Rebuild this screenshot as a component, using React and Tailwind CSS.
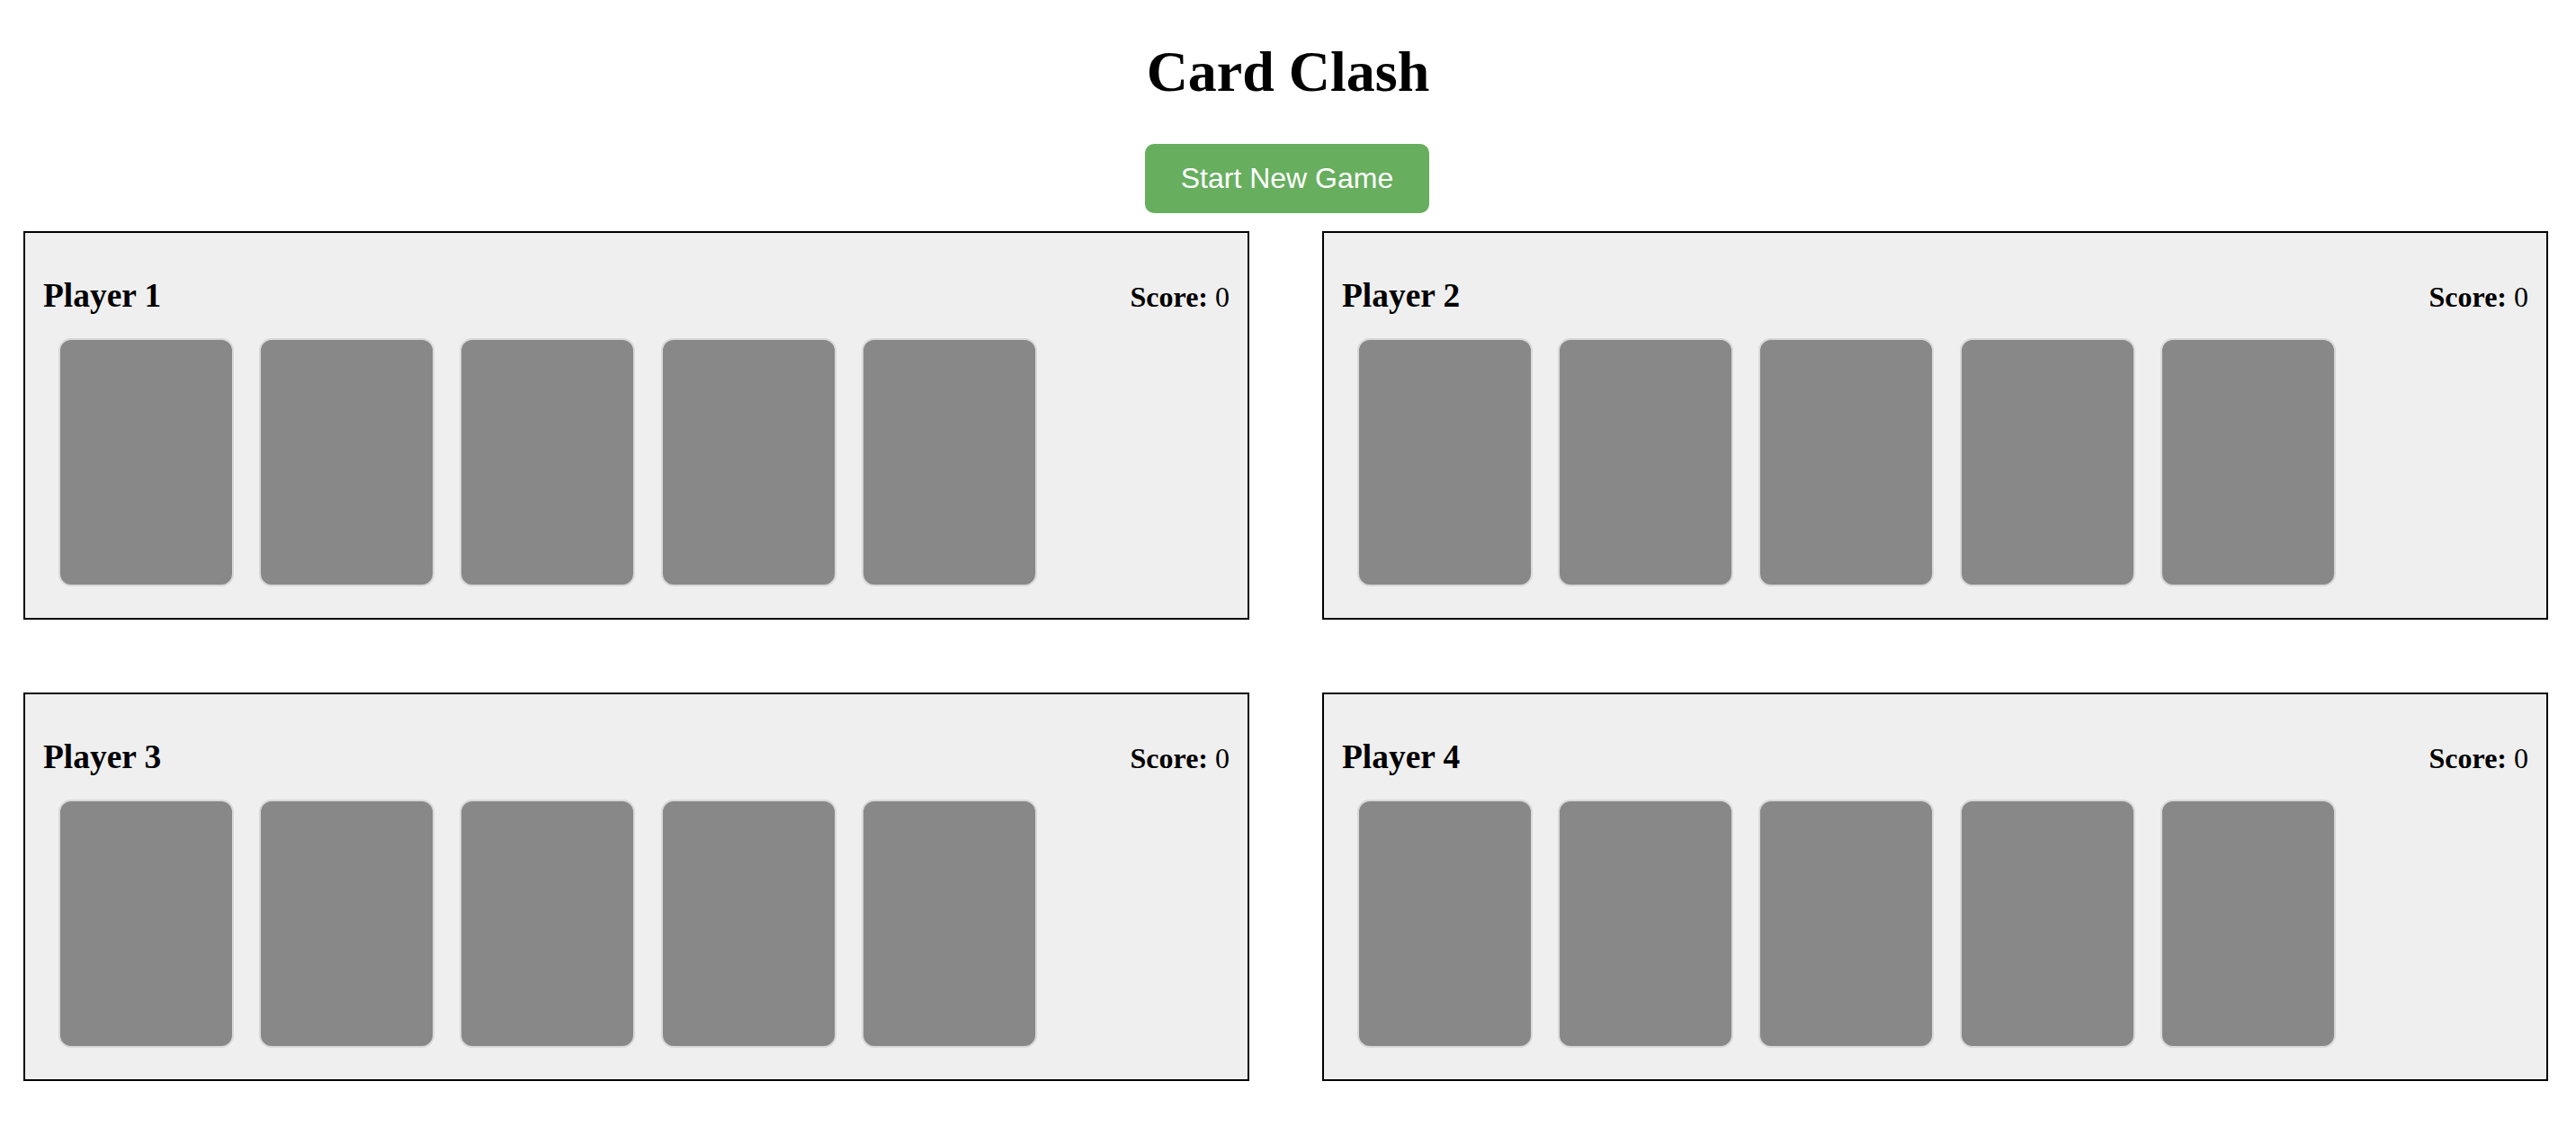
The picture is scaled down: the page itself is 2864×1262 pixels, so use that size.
const players = [
  { id: 1, name: 'Player 1', score: 0 },
  { id: 2, name: 'Player 2', score: 0 },
  { id: 3, name: 'Player 3', score: 0 },
  { id: 4, name: 'Player 4', score: 0 },
];

function Card() {
  return <div className="w-[195px] h-[276px] shrink-0 rounded-[14px] border-2 border-[#d8d8d8] bg-[#888888]" />;
}

function PlayerPanel({ player }) {
  return (
    <div className="border-2 border-black bg-[#efefef] px-[20px] pt-[48px] pb-[35px]">
      <div className="flex items-baseline justify-between h-[43px]">
        <h3 className="text-[37.44px] leading-[43px] font-bold">{player.name}</h3>
        <div className="text-[32px] leading-[37px]">
          <span className="font-bold">Score:</span> {player.score}
        </div>
      </div>
      <div className="mt-[26px] ml-[16.5px] flex gap-[28.4px]">
        {[0, 1, 2, 3, 4].map((i) => (
          <Card key={i} />
        ))}
      </div>
    </div>
  );
}

export default function App() {
  return (
    <div className="min-h-[1262px] bg-white text-black font-['Liberation_Serif','Times_New_Roman',serif]">
      <h1 className="pt-[43px] text-center text-[64px] leading-[73.5px] font-bold">Card Clash</h1>
      <div className="mt-[43px] flex justify-center">
        <button
          type="button"
          className="ml-[-2px] rounded-[10px] bg-[#67ae5f] px-[40px] py-[20px] text-[32px] leading-[37px] text-white font-['Liberation_Sans',Arial,sans-serif]"
        >
          Start New Game
        </button>
      </div>
      <div className="mt-[20px] grid grid-cols-2 gap-x-[81px] gap-y-[81px] pl-[26px] pr-[31px]">
        {players.map((p) => (
          <PlayerPanel key={p.id} player={p} />
        ))}
      </div>
    </div>
  );
}
